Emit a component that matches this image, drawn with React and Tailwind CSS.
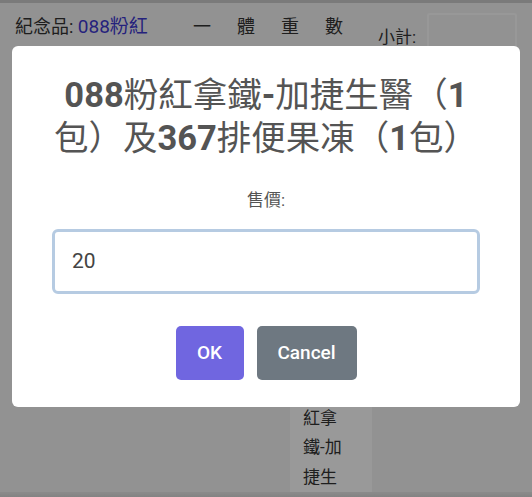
import React from "react";

export default function App() {
  const font = "font-[Roboto,Noto_Sans_CJK_TC,sans-serif]";
  return (
    <div className={`relative w-[532px] h-[497px] overflow-hidden bg-[#f4f4f4] ${font}`}>
      {/* underlying page */}
      <div className="flex flex-col h-full border-t-[3px] border-[#cbcbcb]">
        <div className="flex items-start h-[50px] pl-[15px] text-[#333] text-[18px] leading-[24px]">
          <div className="mt-[12px] w-[178px] whitespace-nowrap">
            紀念品: <span className="text-[#3f3ad0] text-[19px]">088粉紅</span>
          </div>
          <div className="mt-[12px] flex gap-[26px] w-[185px]">
            <span>一</span>
            <span>體</span>
            <span>重</span>
            <span>數</span>
          </div>
          <div className="mt-[22px] w-[49px] text-[17px]">小計:</div>
          <div className="mt-[10px] w-[90px] h-[45px] border-2 border-[#fdfdfd] rounded-[3px] bg-[#f4f4f4]"></div>
        </div>
        <div className="flex-1 flex pl-[290px]">
          <div className="w-[82px] bg-white flex flex-col justify-end pl-[13px] text-[#333] text-[17px] leading-[29.5px]">
            <div>紅拿</div>
            <div>鐵-加</div>
            <div>捷生</div>
          </div>
        </div>
        <div className="h-[5px] bg-gradient-to-b from-[#e8e8e8] to-[#dadada]"></div>
      </div>

      {/* overlay */}
      <div className="absolute inset-0 bg-black/40 flex justify-center items-start pt-[46px]">
        <div className="w-[508px] h-[361px] bg-white rounded-[6px] flex flex-col items-center pt-[28px]">
          <div className="text-[#545454] text-[34.5px] leading-[43px] text-center whitespace-nowrap">
            <span className="font-bold">088</span>粉紅拿鐵<span className="font-bold">-</span>加捷生醫（<span className="font-bold">1</span>
            <br />
            包）及<span className="font-bold">367</span>排便果凍（<span className="font-bold">1</span>包）
          </div>
          <div className="mt-[28px] text-[#545454] text-[17px] leading-[24px]">售價:</div>
          <div className="mt-[17px] w-[428px] h-[65px] border-[3px] border-[#b6cbe2] rounded-[6px] flex items-center pl-[17px] text-[21px] text-[#444] bg-white">
            20
          </div>
          <div className="mt-[32px] flex gap-[13px]">
            <div className="w-[68px] h-[54px] rounded-[5px] bg-[#7066e0] text-white text-[19px] flex items-center justify-center font-medium">
              OK
            </div>
            <div className="w-[100px] h-[54px] rounded-[5px] bg-[#6e7881] text-white text-[19px] flex items-center justify-center font-medium">
              Cancel
            </div>
          </div>
        </div>
      </div>
    </div>
  );
}
